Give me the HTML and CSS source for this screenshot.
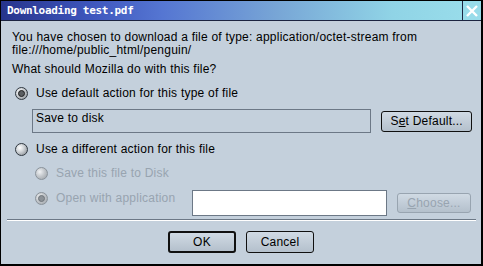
FILE: index.html
```html
<!DOCTYPE html>
<html>

<head>
    <link rel="stylesheet" href="styles.css">
</head>

<body>
    <div class="window">
        <div class="titlebar">
            <div class="title">Downloading test.pdf</div>
            <div class="close">
                <svg width="12" height="12" viewBox="0 0 12 12">
                    <path d="M1 1 L11 11 M11 1 L1 11" stroke="#fff" stroke-width="2.4" />
                </svg>
            </div>
        </div>
        <div class="content">
            <p class="intro">You have chosen to download a file of type: application/octet-stream from<br>file:///home/public_html/penguin/</p>
            <p class="question">What should Mozilla do with this file?</p>

            <div class="option">
                <span class="radio checked"></span>
                <span>Use default action for this type of file</span>
            </div>
            <div class="default-row">
                <div class="field">Save to disk</div>
                <button class="button set-default">S<u>e</u>t Default...</button>
            </div>

            <div class="option different">
                <span class="radio"></span>
                <span>Use a different action for this file</span>
            </div>
            <div class="option sub disabled">
                <span class="radio"></span>
                <span>Save this file to Disk</span>
            </div>
            <div class="option sub disabled app-row">
                <span class="radio checked"></span>
                <span class="app-label">Open with application</span>
                <input class="app-input" type="text">
                <button class="button choose" disabled><u>C</u>hoose...</button>
            </div>
        </div>
        <hr class="separator">
        <div class="actions">
            <button class="button ok">OK</button>
            <button class="button">Cancel</button>
        </div>
    </div>
</body>

</html>
```
FILE: styles.css
```css
body {
    margin: 0;
    padding: 0;
    font-family: "Liberation Sans", Arial, sans-serif;
    font-size: 12px;
    letter-spacing: 0.22px;
    color: #000;
    background-color: #c4d0dc;
}

.window {
    width: 483px;
    height: 266px;
    box-sizing: border-box;
    border-style: solid;
    border-color: #000;
    border-width: 1px 2px 2px 1px;
    background-color: #c4d0dc;
    display: flex;
    flex-direction: column;
}

.titlebar {
    display: flex;
    height: 19px;
    border-bottom: 1px solid #1c2440;
}

.title {
    flex: 1;
    padding-left: 6px;
    color: white;
    font-family: "DejaVu Sans Mono", monospace;
    font-weight: bold;
    font-size: 11px;
    letter-spacing: -0.3px;
    line-height: 19px;
    background: linear-gradient(to right, #26348c 0%, #3f57be 20%, #5576d2 35%, #78a6d6 60%, #90d4e6 85%, #98dcea 100%);
}

.close {
    width: 18px;
    border-left: 1px solid #1c2440;
    background-color: #98dcea;
    display: flex;
    align-items: center;
    justify-content: center;
}

.content {
    padding: 10px 9px 0 11px;
}

.intro {
    margin: 0;
    line-height: 13px;
}

.question {
    margin: 5px 0 0 0;
    line-height: 14px;
}

.option {
    display: flex;
    align-items: center;
    gap: 8px;
    height: 14px;
    margin-top: 10px;
    padding-left: 3px;
}

.radio {
    width: 11px;
    height: 11px;
    border-radius: 50%;
    border: 1px solid #303840;
    background: radial-gradient(circle at 35% 35%, #ffffff 0%, #d0d4d8 40%, #7c8288 100%);
    position: relative;
    flex: none;
}

.radio.checked::after {
    content: "";
    position: absolute;
    left: 2px;
    top: 2px;
    width: 5px;
    height: 5px;
    border-radius: 50%;
    border: 1px solid #202020;
    background: #5a5e62;
}

.default-row {
    display: flex;
    align-items: center;
    gap: 10px;
    margin: 9px 0 0 20px;
}

.field {
    width: 333px;
    height: 20px;
    border: 1px solid #6c7886;
    padding: 1px 3px;
    line-height: 14px;
}

.button {
    font-family: "Liberation Sans", Arial, sans-serif;
    font-size: 12px;
    letter-spacing: 0.22px;
    color: #000;
    height: 21px;
    padding: 0 8px;
    border: 1px solid #101010;
    border-radius: 3px;
    background: linear-gradient(to bottom, #d0dae4 0%, #b4c0cc 100%);
}

.set-default {
    width: 91px;
}

.different {
    margin-top: 9px;
}

.sub {
    padding-left: 23px;
}

.disabled {
    color: #98a4b0;
}

.disabled .radio {
    border-color: #8a929a;
    background: radial-gradient(circle at 35% 35%, #f0f2f4 0%, #c4c8cc 45%, #989ea4 100%);
}

.disabled .radio.checked::after {
    border-color: #70767c;
    background: #8c9298;
}

.app-row {
    margin-top: 11px;
}

.app-label {
    width: 128px;
}

.app-input {
    width: 195px;
    height: 26px;
    box-sizing: border-box;
    margin: 10px 0 0 0;
    border: 1px solid #6c7886;
    background: white;
}

.choose {
    width: 74px;
    height: 20px;
    margin: 10px 0 0 2px;
    color: #98a4b0;
    border-color: #98a4b0;
}

.separator {
    margin: 14px 5px 0 6px;
    border: none;
    border-top: 1px solid #6c7886;
    border-bottom: 1px solid #ffffff;
}

.actions {
    display: flex;
    justify-content: center;
    gap: 10px;
    margin-top: 10px;
}

.actions .button {
    width: 68px;
    height: 22px;
}

.ok {
    border-width: 2px;
}
```
